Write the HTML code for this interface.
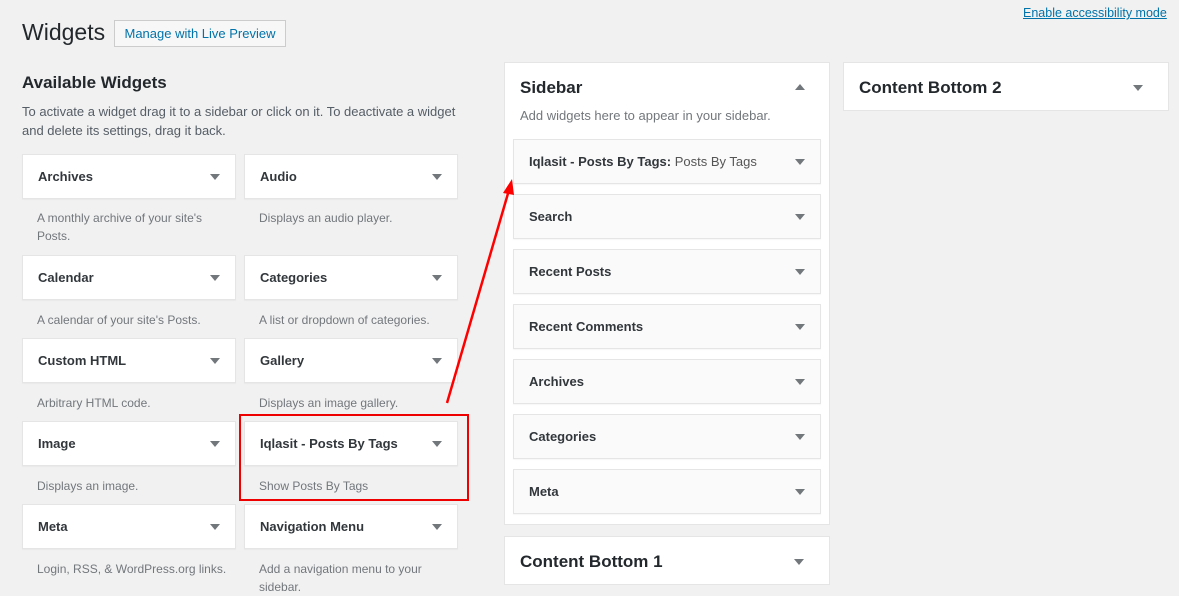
<!DOCTYPE html>
<html><head><style>
body{margin:0;width:1179px;height:589px;background:#f1f1f1;font-family:"Liberation Sans",sans-serif;color:#23282d;position:relative;overflow:hidden}
.a{position:absolute}
.w{position:absolute;background:#fff;border:1px solid #e5e5e5;box-shadow:0 1px 1px rgba(0,0,0,.04);box-sizing:border-box;height:45px;font-size:13px;font-weight:bold;line-height:44px;padding-left:15px;color:#32373c}
.s .w{background:#fafafa}
.w:after{content:"";position:absolute;right:15px;top:19px;border-left:5px solid transparent;border-right:5px solid transparent;border-top:6px solid #72777c}
.d{position:absolute;font-size:12px;color:#72777c;line-height:18px;width:190px}
.p{position:absolute;background:#fff;border:1px solid #e5e5e5;box-sizing:border-box}
.h{position:absolute;font-size:17px;font-weight:bold;left:15px}
.car{position:absolute;border-left:5px solid transparent;border-right:5px solid transparent;border-top:6px solid #72777c}
</style></head><body>
<div class="a" style="left:22px;top:19px;font-size:23px">Widgets</div>
<div class="a" style="left:114px;top:20px;width:172px;height:27px;box-sizing:border-box;border:1px solid #ccc;background:#f7f7f7;font-size:13px;color:#0073aa;line-height:25px;text-align:center">Manage with Live Preview</div>
<div class="a" style="left:1023px;top:6px;font-size:12.5px;color:#0073aa;text-decoration:underline">Enable accessibility mode</div>
<div class="a" style="left:22px;top:73px;font-size:17px;font-weight:bold">Available Widgets</div>
<div class="a" style="left:22px;top:102px;font-size:13px;color:#555d66;line-height:19px;width:445px">To activate a widget drag it to a sidebar or click on it. To deactivate a widget and delete its settings, drag it back.</div>

<div class="w" style="left:22px;top:154px;width:214px">Archives</div>
<div class="d" style="left:37px;top:209px">A monthly archive of your site's Posts.</div>
<div class="w" style="left:244px;top:154px;width:214px">Audio</div>
<div class="d" style="left:259px;top:209px">Displays an audio player.</div>
<div class="w" style="left:22px;top:255px;width:214px">Calendar</div>
<div class="d" style="left:37px;top:311px">A calendar of your site's Posts.</div>
<div class="w" style="left:244px;top:255px;width:214px">Categories</div>
<div class="d" style="left:259px;top:311px">A list or dropdown of categories.</div>
<div class="w" style="left:22px;top:338px;width:214px">Custom HTML</div>
<div class="d" style="left:37px;top:394px">Arbitrary HTML code.</div>
<div class="w" style="left:244px;top:338px;width:214px">Gallery</div>
<div class="d" style="left:259px;top:394px">Displays an image gallery.</div>
<div class="w" style="left:22px;top:421px;width:214px">Image</div>
<div class="d" style="left:37px;top:477px">Displays an image.</div>
<div class="w" style="left:244px;top:421px;width:214px">Iqlasit - Posts By Tags</div>
<div class="d" style="left:259px;top:477px">Show Posts By Tags</div>
<div class="w" style="left:22px;top:504px;width:214px">Meta</div>
<div class="d" style="left:37px;top:560px">Login, RSS, &amp; WordPress.org links.</div>
<div class="w" style="left:244px;top:504px;width:214px">Navigation Menu</div>
<div class="d" style="left:259px;top:560px">Add a navigation menu to your sidebar.</div>

<div class="a" style="left:239px;top:414px;width:230px;height:87px;box-sizing:border-box;border:2px solid #e00"></div>

<div class="p" style="left:504px;top:62px;width:326px;height:463px">
<div class="h" style="top:15px">Sidebar</div>
<div class="car" style="right:24px;top:21px;border-top:0;border-bottom:6px solid #72777c"></div>
<div class="a" style="left:15px;top:45px;font-size:13px;color:#72777c">Add widgets here to appear in your sidebar.</div>
</div>
<div class="s">
<div class="w" style="left:513px;top:139px;width:308px">Iqlasit - Posts By Tags:<span style="font-weight:normal;color:#555"> Posts By Tags</span></div>
<div class="w" style="left:513px;top:194px;width:308px">Search</div>
<div class="w" style="left:513px;top:249px;width:308px">Recent Posts</div>
<div class="w" style="left:513px;top:304px;width:308px">Recent Comments</div>
<div class="w" style="left:513px;top:359px;width:308px">Archives</div>
<div class="w" style="left:513px;top:414px;width:308px">Categories</div>
<div class="w" style="left:513px;top:469px;width:308px">Meta</div>
</div>
<div class="p" style="left:504px;top:536px;width:326px;height:49px">
<div class="h" style="top:15px">Content Bottom 1</div>
<div class="car" style="right:25px;top:22px"></div>
</div>
<div class="p" style="left:843px;top:62px;width:326px;height:49px">
<div class="h" style="top:15px">Content Bottom 2</div>
<div class="car" style="right:25px;top:22px"></div>
</div>

<svg class="a" style="left:0;top:0" width="1179" height="589">
<line x1="447" y1="403" x2="509" y2="190" stroke="#f00" stroke-width="2.5"/>
<polygon points="512,179 503,193 514,195" fill="#f00"/>
</svg>
</body></html>
